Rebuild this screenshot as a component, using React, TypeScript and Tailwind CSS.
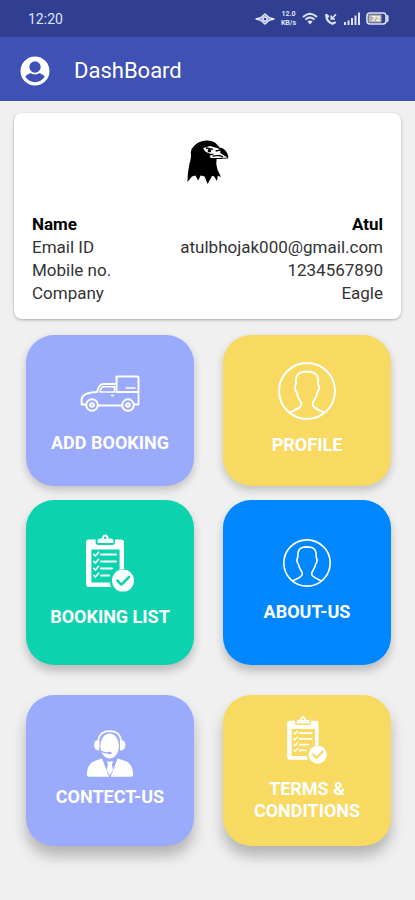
import * as React from 'react';
import { clsx } from 'clsx';

interface IconProps {
  className?: string;
}

interface TileProps {
  label: string;
  color: string;
  icon: React.ReactNode;
  className?: string;
}

const userDetails = [
  { label: 'Name', value: 'Atul', bold: true },
  { label: 'Email ID', value: 'atulbhojak000@gmail.com', bold: false },
  { label: 'Mobile no.', value: '1234567890', bold: false },
  { label: 'Company', value: 'Eagle', bold: false }
];

const EyeIcon: React.FC = () => (
  <svg viewBox="0 0 20 14" className="w-5 h-3.5" fill="none" stroke="currentColor" strokeWidth="1.5">
    <path d="M1 7 L5.6 5.8 L10 2 L14.4 5.8 L19 7 L14.4 8.2 L10 12 L5.6 8.2 Z" fill="currentColor" fillOpacity="0.5" strokeLinejoin="round" />
    <circle cx="10" cy="7" r="2" fill="#303f91" />
  </svg>
);

const WifiIcon: React.FC = () => (
  <svg viewBox="0 0 16 14" className="w-4 h-3.5" fill="none" stroke="currentColor" strokeWidth="1.9">
    <path d="M1 5 Q8 -1.5 15 5" />
    <path d="M3.4 7.6 Q8 3.4 12.6 7.6" />
    <path d="M5.4 9.4 Q8 7.4 10.6 9.4 L8 12.6 Z" fill="currentColor" stroke="none" />
  </svg>
);

const CallIcon: React.FC = () => (
  <svg viewBox="0 0 14 14" className="w-3.5 h-3.5" fill="none" stroke="currentColor">
    <path d="M2.4 3 Q2 9.4 8.5 11.8 L11 10.6" strokeWidth="2.2" strokeLinecap="round" />
    <path d="M2.4 3 L4.2 4.4" strokeWidth="2.2" strokeLinecap="round" />
    <path d="M12 2.4 L7.6 6.6 M7.2 3.4 V7 H11" strokeWidth="1.5" />
  </svg>
);

const SignalIcon: React.FC = () => (
  <svg viewBox="0 0 16 13" className="w-4 h-[13px]" fill="currentColor">
    <rect x="0" y="10" width="2" height="3" />
    <rect x="3.5" y="8.5" width="2" height="4.5" />
    <rect x="7" y="6" width="2" height="7" />
    <rect x="10.5" y="3.5" width="2" height="9.5" />
    <rect x="14" y="0.5" width="2" height="12.5" />
  </svg>
);

const BatteryIcon: React.FC = () => (
  <svg viewBox="0 0 23 13" className="w-[23px] h-[13px]">
    <rect x="1" y="1" width="19" height="11" rx="3" fill="none" stroke="currentColor" strokeWidth="1.6" />
    <rect x="2.5" y="2.5" width="13" height="8" rx="1" fill="#b9b3a8" />
    <path d="M21.6 4 V9" stroke="currentColor" strokeWidth="1.8" strokeLinecap="round" />
    <text x="10" y="9.4" textAnchor="middle" fontSize="8" fontWeight="700" fill="#ffffff">72</text>
  </svg>
);

const AccountIcon: React.FC = () => (
  <svg viewBox="0 0 30 30" className="w-[30px] h-[30px]">
    <circle cx="15" cy="15" r="14.5" fill="#ffffff" />
    <path d="M5.2 20.6 Q9 16.4 15 16.4 T24.8 20.6 Q21 26.2 15 26.2 T5.2 20.6 Z" fill="#3f51b5" />
    <circle cx="15" cy="11" r="6.6" fill="#3f51b5" stroke="#ffffff" strokeWidth="1.8" />
  </svg>
);

const EagleLogo: React.FC = () => (
  <svg viewBox="0 0 44 46" className="w-11 h-[46px]" role="img" aria-label="Eagle">
    <path
      d="M5.6 10 Q11 2 20 1.6 Q29 1 33.5 8.6 Q40 9 42.4 17.6 L42 19.6 L37.6 19.4 Q34 20.4 30.6 20 Q29.6 25 31.4 30.4 L35 38 L31.8 36.8 L31 42 L28 37.2 L26 37 L21.6 45 L18.6 37.4 L14.6 36.6 L12.2 41.4 L9.4 36.4 L6 37.6 L1.4 43 Q1.6 33 3.4 25 Q5.6 18 4.8 13.4 Z"
      fill="#000000"
    />
    <path d="M17 9.2 L24 7 L32.5 9.4 L35.6 12.4 L33.6 13 L41.6 18.6 L32 19 L25 19 L23.4 17 L29 14.8 L24 14.8 L19.6 12.8 Z" fill="#ffffff" />
    <path d="M20 9 L27 10.4 M29.6 12 L34 11.2 M26.4 17.2 L33 16.4 L37 17.8" stroke="#000000" strokeWidth="1.3" fill="none" />
    <circle cx="23.4" cy="11.8" r="1.8" fill="#000000" />
    <path d="M34.2 10 Q40.2 10.6 41.6 18 L38.2 16.4 L34.6 14.2 Z" fill="#000000" />
  </svg>
);

const TruckIcon: React.FC<IconProps> = ({ className }) => (
  <svg viewBox="0 0 60 60" className={className} fill="none" stroke="currentColor" strokeWidth="2" strokeLinejoin="round" strokeLinecap="round">
    <path d="M36.5 12.5 H57 Q58.5 12.5 58.5 14 V28 H36.5 Z" />
    <path d="M46 24 H55" strokeWidth="1.6" />
    <path d="M36.5 20 H24 Q20 20 18.5 24 L17 28 Q3 28.5 1.6 35 V40.5 H6" />
    <path d="M34.5 22.8 V28 H20 Q21 22.8 24 22.8 Z" strokeWidth="1.6" />
    <path d="M31.5 31.5 H33.5" strokeWidth="1.6" />
    <path d="M58.5 28 V40.5 H54 M18 41.5 H42" strokeWidth="1.8" />
    <circle cx="12" cy="41" r="5.8" />
    <circle cx="12" cy="41" r="1.8" />
    <circle cx="48" cy="41" r="5.8" />
    <circle cx="48" cy="41" r="1.8" />
  </svg>
);

const PersonIcon: React.FC<IconProps> = ({ className }) => (
  <svg viewBox="0 0 58 58" className={className} fill="none" stroke="currentColor" strokeWidth="2" strokeLinejoin="round">
    <circle cx="29" cy="29" r="28" />
    <path d="M11.6 50.6 C17 48 23.4 46 23.4 42 C23.4 38.6 19.4 36.6 18.6 30.4 C16.6 28 16.8 24 18 21.6 C17.4 13.6 19.6 9.8 29 9.6 C38.4 9.8 40.6 13.6 40 21.6 C41.2 24 41.4 28 39.4 30.4 C38.6 36.6 34.6 38.6 34.6 42 C34.6 46 41 48 46.4 50.6" />
  </svg>
);

const ClipboardIcon: React.FC<IconProps> = ({ className }) => (
  <svg viewBox="0 0 58 58" className={className} fill="none">
    <path
      d="M8 5.6 H14.6 V8.6 Q14.6 11 17 11 H31.6 Q34 11 34 8.6 V5.6 H40 Q43 5.6 43 8.6 V35 Q39 35 38.6 36 V15.6 H10.4 V48.4 H29 Q29 51 30 53 H8 Q5 53 5 50 V8.6 Q5 5.6 8 5.6 Z"
      fill="currentColor"
    />
    <path
      d="M16.6 9 V6.6 Q16.6 4.6 19 4.4 H21 Q21.4 0.4 24.2 0.4 T27.6 4.4 H30 Q32.4 4.6 32.4 6.6 V9 Z M24.2 2.4 A1.3 1.3 0 1 0 24.2 5 A1.3 1.3 0 1 0 24.2 2.4 Z"
      fill="currentColor"
      fillRule="evenodd"
    />
    <g stroke="currentColor" strokeWidth="2">
      <path d="M12.4 20 L14.4 22 L18 17.8 M12.4 27 L14.4 29 L18 24.8 M12.4 34 L14.4 36 L18 31.8 M12.4 41 L14.4 43 L18 38.8" strokeWidth="1.7" />
      <path d="M20 20.6 H35 M20 27.6 H35 M20 34.6 H31 M20 41.6 H28" strokeLinecap="round" />
    </g>
    <circle cx="42" cy="46.6" r="11" fill="currentColor" />
    <path d="M36.4 46.6 L40.4 50.6 L48 43" className="stroke-(--tile)" strokeWidth="2.6" strokeLinecap="round" strokeLinejoin="round" />
  </svg>
);

const SupportIcon: React.FC<IconProps> = ({ className }) => (
  <svg viewBox="0 0 48 48" className={className}>
    <g fill="currentColor">
      <ellipse cx="23.6" cy="16" rx="9.4" ry="12.4" />
      <path d="M12 10 Q8 10.4 8 15 T12 20.6 L13.4 20.4 V10.4 Z M35.4 10 Q39.4 10.4 39.4 15 T35.4 20.6 L34 20.4 V10.4 Z" />
      <path d="M16 28.4 L23 46.8 H3 Q0.6 46.8 0.8 44 Q1.6 33.6 8.6 31 Z M31.6 28.4 L24.8 46.8 H45 Q47.4 46.8 47.2 44 Q46.4 33.6 39.4 31 Z" />
      <path d="M20.4 31.4 H27.4 L25.8 34 L27 40 L23.9 45.6 L20.8 40 L22 34 Z" />
    </g>
    <path d="M12.4 10.4 Q13.6 1.2 23.7 1.2 T35 10.4" fill="none" stroke="currentColor" strokeWidth="1.8" />
    <path d="M13.2 19.6 Q15.4 22.6 22 22.8" fill="none" className="stroke-(--tile)" strokeWidth="1.2" />
    <ellipse cx="23.6" cy="23" rx="2.2" ry="1.3" className="fill-(--tile)" />
  </svg>
);

const Tile: React.FC<TileProps> = ({ label, color, icon, className }) => (
  <button
    type="button"
    className={clsx(
      'flex flex-col items-center justify-center rounded-[28px] px-5 pb-1 text-white text-lg leading-[22px] font-bold',
      color,
      className
    )}
  >
    {icon}
    <span>{label}</span>
  </button>
);

const App: React.FC = () => {
  return (
    <div className="min-h-screen bg-[#f0f0f0] font-['Roboto',sans-serif]">
      {/* Status bar */}
      <div className="flex items-center justify-between h-[37px] pl-7 pr-[26px] bg-[#303f91] text-[#dfe4fa]">
        <span className="text-sm">12:20</span>
        <div className="flex items-center gap-1.5">
          <EyeIcon />
          <span className="flex flex-col items-center text-[7px] leading-[9px] font-bold">
            <span>12.0</span>
            <span>KB/s</span>
          </span>
          <WifiIcon />
          <CallIcon />
          <SignalIcon />
          <BatteryIcon />
        </div>
      </div>

      {/* App bar */}
      <header className="flex items-center gap-6 h-16 px-5 pt-1 bg-[#3f51b5] text-white">
        <button type="button" aria-label="Account">
          <AccountIcon />
        </button>
        <h1 className="text-[22px] leading-7">DashBoard</h1>
      </header>

      <main className="pb-12">
        {/* User card */}
        <section className="mx-3.5 mt-3 px-[18px] pt-[26px] pb-3.5 rounded-lg bg-white shadow-[0_1px_3px_rgba(0,0,0,0.3)]">
          <div className="flex justify-center mb-7">
            <EagleLogo />
          </div>
          <dl className="text-[17px] leading-[23px]">
            {userDetails.map((item) => (
              <div key={item.label} className={clsx('flex justify-between', item.bold ? 'text-black font-bold' : 'text-[#333333]')}>
                <dt>{item.label}</dt>
                <dd>{item.value}</dd>
              </div>
            ))}
          </dl>
        </section>

        {/* Menu tiles */}
        <nav className="flex flex-col gap-3.5 mt-4 pl-[26px] pr-6">
          <div className="grid grid-cols-2 gap-x-[29px]">
            <Tile
              label="ADD BOOKING"
              color="bg-[#9aaafc] [--tile:#9aaafc]"
              className="h-[151px] gap-2 shadow-[0_4px_8px_rgba(0,0,0,0.2)]"
              icon={<TruckIcon className="w-[60px] h-[60px]" />}
            />
            <Tile
              label="PROFILE"
              color="bg-[#f8d961] [--tile:#f8d961]"
              className="h-[151px] gap-3.5 shadow-[0_4px_8px_rgba(0,0,0,0.2)]"
              icon={<PersonIcon className="w-[58px] h-[58px]" />}
            />
          </div>
          <div className="grid grid-cols-2 gap-x-[29px]">
            <Tile
              label="BOOKING LIST"
              color="bg-[#0cd3ae] [--tile:#0cd3ae]"
              className="h-[165px] gap-3.5 shadow-[0_6px_10px_rgba(0,0,0,0.22)]"
              icon={<ClipboardIcon className="w-[58px] h-[58px]" />}
            />
            <Tile
              label="ABOUT-US"
              color="bg-[#0087ff] [--tile:#0087ff]"
              className="h-[165px] gap-3.5 shadow-[0_6px_10px_rgba(0,0,0,0.22)]"
              icon={<PersonIcon className="w-12 h-12" />}
            />
          </div>
          <div className="grid grid-cols-2 gap-x-[29px] mt-4">
            <Tile
              label="CONTECT-US"
              color="bg-[#9aaafc] [--tile:#9aaafc]"
              className="h-[151px] gap-2 shadow-[0_10px_14px_rgba(0,0,0,0.25)]"
              icon={<SupportIcon className="w-12 h-12" />}
            />
            <Tile
              label="TERMS & CONDITIONS"
              color="bg-[#f8d961] [--tile:#f8d961]"
              className="h-[151px] gap-3.5 shadow-[0_10px_14px_rgba(0,0,0,0.25)]"
              icon={<ClipboardIcon className="w-12 h-12" />}
            />
          </div>
        </nav>
      </main>
    </div>
  );
};

export default App;
